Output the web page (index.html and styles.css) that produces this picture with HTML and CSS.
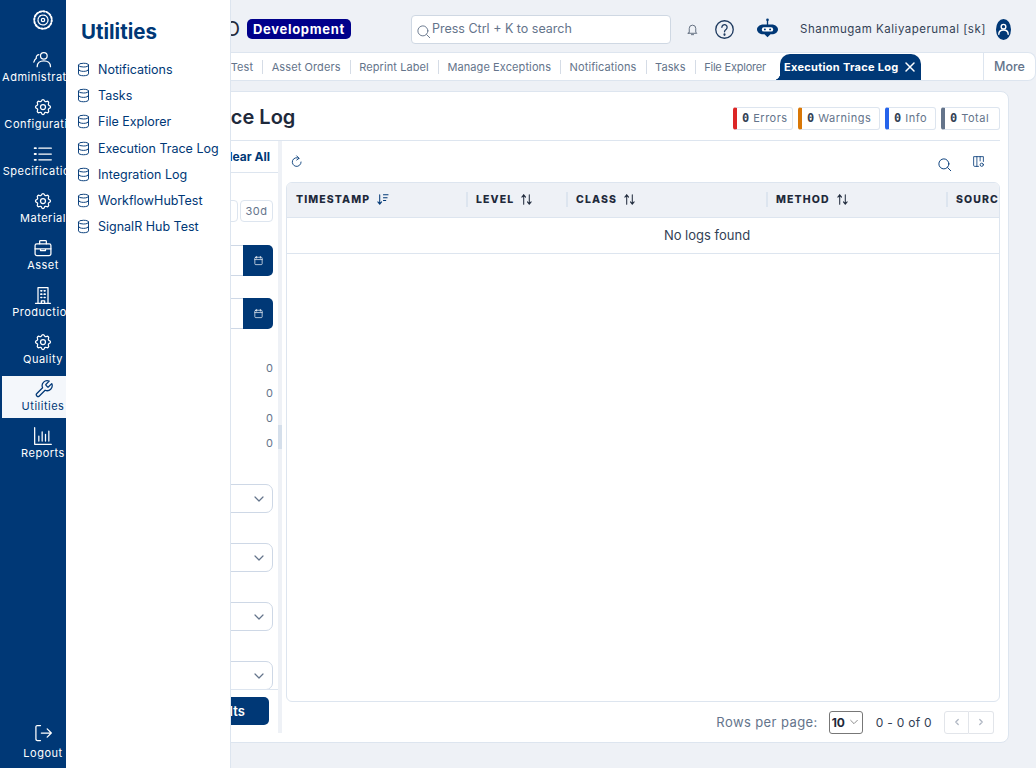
FILE: index.html
```html
<!DOCTYPE html>
<html lang="en">
<head>
    <meta charset="UTF-8">
    <meta name="viewport" content="width=device-width, initial-scale=1.0">
    <title>Execution Trace Log</title>
    <link rel="stylesheet" href="styles.css">
</head>
<body>
    <svg class="icon-defs">
        <symbol id="i-gear" viewBox="0 0 24 24"><path d="M10.325 4.317c.426-1.756 2.924-1.756 3.35 0a1.724 1.724 0 002.573 1.066c1.543-.94 3.31.826 2.37 2.37a1.724 1.724 0 001.065 2.572c1.756.426 1.756 2.924 0 3.35a1.724 1.724 0 00-1.066 2.573c.94 1.543-.826 3.31-2.37 2.37a1.724 1.724 0 00-2.572 1.065c-.426 1.756-2.924 1.756-3.35 0a1.724 1.724 0 00-2.573-1.066c-1.543.94-3.31-.826-2.37-2.37a1.724 1.724 0 00-1.065-2.572c-1.756-.426-1.756-2.924 0-3.35a1.724 1.724 0 001.066-2.573c-.94-1.543.826-3.31 2.37-2.37.996.608 2.296.07 2.572-1.065z"/><circle cx="12" cy="12" r="3"/></symbol>
        <symbol id="i-db" viewBox="0 0 24 24"><ellipse cx="12" cy="5" rx="8" ry="3"/><path d="M4 5v14c0 1.700 3.600 3 8 3s8-1.300 8-3V5M4 12c0 1.700 3.600 3 8 3s8-1.300 8-3"/></symbol>
        <symbol id="i-sort" viewBox="0 0 14 14"><path d="M4 12V2M4 2L2 4.500M4 2l2 2.500M10 2v10M10 12l-2-2.500M10 12l2-2.500"/></symbol>
        <symbol id="i-search" viewBox="0 0 24 24"><circle cx="11" cy="11" r="8"/><path d="M17 17l5 5"/></symbol>
        <symbol id="i-cal" viewBox="0 0 24 24"><rect x="4" y="5" width="16" height="16" rx="2"/><path d="M8 3v4M16 3v4M4 10h16"/></symbol>
        <symbol id="i-chev" viewBox="0 0 12 12"><path d="M2 4l4 4 4-4"/></symbol>
    </svg>

    <nav class="rail">
        <div class="rail-logo">
            <svg class="rail-icon" viewBox="0 0 24 24"><circle cx="12" cy="12" r="10.500" stroke-width="2.400" stroke-dasharray="2 2.100"/><circle cx="12" cy="12" r="6" stroke-dasharray="2.200 1"/><circle cx="12" cy="12" r="2"/></svg>
        </div>
        <a class="rail-item">
            <svg class="rail-icon" viewBox="0 0 24 24"><circle cx="13" cy="7" r="4"/><path d="M5 20c0-4.500 3.500-7 8-7s8 2.500 8 7M7 5.500C4.500 6 3.500 8 4 10c-1.500 1-2.500 2.500-3 4.500"/></svg>
            <span>Administration</span>
        </a>
        <a class="rail-item">
            <svg class="rail-icon"><use href="#i-gear"/></svg>
            <span>Configuration</span>
        </a>
        <a class="rail-item">
            <svg class="rail-icon" viewBox="0 0 24 24"><path d="M7 5h15M7 12h15M7 19h15"/><path d="M2 5h1.500M2 12h1.500M2 19h1.500" stroke-width="2.200"/></svg>
            <span>Specifications</span>
        </a>
        <a class="rail-item">
            <svg class="rail-icon"><use href="#i-gear"/></svg>
            <span>Material</span>
        </a>
        <a class="rail-item">
            <svg class="rail-icon" viewBox="0 0 24 24"><rect x="2.500" y="7" width="19" height="14" rx="2"/><path d="M8 7V4a1 1 0 011-1h6a1 1 0 011 1v3M2.500 13h19M9 13v2h6v-2"/></svg>
            <span>Asset</span>
        </a>
        <a class="rail-item">
            <svg class="rail-icon" viewBox="0 0 24 24"><path d="M6 22V3h12v19M3 22h18M10 22v-3h4v3"/><path d="M9.500 7h1M13.500 7h1M9.500 11h1M13.500 11h1M9.500 15h1M13.500 15h1" stroke-width="2"/></svg>
            <span>Production</span>
        </a>
        <a class="rail-item">
            <svg class="rail-icon"><use href="#i-gear"/></svg>
            <span>Quality</span>
        </a>
        <a class="rail-item active">
            <svg class="rail-icon" viewBox="0 0 24 24"><path d="M15.700 6.300a1 1 0 000 1.400l1.600 1.600a1 1 0 001.400 0l3.770-3.770a6 6 0 01-7.940 7.940l-6.910 6.910a2.120 2.120 0 01-3-3l6.910-6.910a6 6 0 017.940-7.940l-3.760 3.760z"/></svg>
            <span>Utilities</span>
        </a>
        <a class="rail-item">
            <svg class="rail-icon" viewBox="0 0 24 24"><path d="M2 2v20h20M7 18v-6M11 18V7M15 18v-8M19 18V6"/></svg>
            <span>Reports</span>
        </a>
        <a class="rail-item logout">
            <svg class="rail-icon" viewBox="0 0 24 24"><path d="M9 3H5a2 2 0 00-1.500 1.500v15A2 2 0 005 21h4M10 12h12M17 7l5 5-5 5"/></svg>
            <span>Logout</span>
        </a>
    </nav>

    <aside class="flyout">
        <h2>Utilities</h2>
        <ul>
            <li><svg><use href="#i-db"/></svg>Notifications</li>
            <li><svg><use href="#i-db"/></svg>Tasks</li>
            <li><svg><use href="#i-db"/></svg>File Explorer</li>
            <li><svg><use href="#i-db"/></svg>Execution Trace Log</li>
            <li><svg><use href="#i-db"/></svg>Integration Log</li>
            <li><svg><use href="#i-db"/></svg>WorkflowHubTest</li>
            <li><svg><use href="#i-db"/></svg>SignalR Hub Test</li>
        </ul>
    </aside>

    <div class="main">
        <header class="topbar">
            <div class="brand">PRO</div>
            <div class="env-badge">Development</div>
            <div class="search-box">
                <svg><use href="#i-search"/></svg>
                <span>Press Ctrl + K to search</span>
            </div>
            <svg class="bell" viewBox="0 0 24 24"><path d="M6 17V10a6 6 0 0112 0v7l2 2H4zM10 21.500h4"/></svg>
            <svg class="help" viewBox="0 0 24 24"><circle cx="12" cy="12" r="10"/><path d="M9 9.500a3 3 0 115 2.200c-1.200.9-2 1.500-2 3"/><path d="M12 17.500v.6" stroke-width="2.400"/></svg>
            <svg class="bot" viewBox="0 0 24 24"><path d="M12 8V2.500" stroke="#003876" stroke-width="1.500"/><circle class="bot-fill" cx="12" cy="2" r="1.500"/><path class="bot-fill" d="M7 7.500h10c3.500 0 7 2.500 7 5.500s-3.500 5.500-7 5.500h-1.500L12 22l-3.500-3.500H7c-3.500 0-7-2.500-7-5.500s3.500-5.500 7-5.500z"/><rect x="5.500" y="10.500" width="13" height="5" rx="2.500" fill="#fff"/><circle class="bot-fill" cx="9" cy="13" r="1.100"/><circle class="bot-fill" cx="15" cy="13" r="1.100"/></svg>
            <span class="user-name">Shanmugam Kaliyaperumal [sk]</span>
            <div class="avatar">
                <svg viewBox="0 0 16 22"><circle cx="8" cy="8" r="2.500"/><path d="M3 16c0-3 2-4.500 5-4.500s5 1.500 5 4.500"/></svg>
            </div>
        </header>

        <div class="tabbar">
            <div class="tabs">
                <a class="tab">Test</a>
                <a class="tab">Asset Orders</a>
                <a class="tab">Reprint Label</a>
                <a class="tab">Manage Exceptions</a>
                <a class="tab">Notifications</a>
                <a class="tab">Tasks</a>
                <a class="tab last">File Explorer</a>
                <a class="tab-active">Execution Trace Log
                    <svg viewBox="0 0 12 12"><path d="M2 2l8 8M10 2l-8 8"/></svg>
                </a>
            </div>
            <a class="more">More</a>
        </div>

        <section class="card">
            <div class="card-head">
                <h1>Execution Trace Log</h1>
                <div class="stats">
                    <div class="stat s-error"><b>0</b>Errors</div>
                    <div class="stat s-warn"><b>0</b>Warnings</div>
                    <div class="stat s-info"><b>0</b>Info</div>
                    <div class="stat s-total"><b>0</b>Total</div>
                </div>
            </div>

            <div class="card-body">
                <div class="filters">
                    <div class="filters-head">
                        <a>Clear All</a>
                    </div>
                    <div class="filters-scroll">
                        <div class="quick">
                            <button></button>
                            <button>30d</button>
                        </div>
                        <div class="date-field">
                            <div class="date-input"></div>
                            <button><svg><use href="#i-cal"/></svg></button>
                        </div>
                        <div class="date-field second">
                            <div class="date-input"></div>
                            <button><svg><use href="#i-cal"/></svg></button>
                        </div>
                        <ul class="counts">
                            <li>0</li>
                            <li>0</li>
                            <li>0</li>
                            <li>0</li>
                        </ul>
                        <div class="select"><svg><use href="#i-chev"/></svg></div>
                        <div class="select"><svg><use href="#i-chev"/></svg></div>
                        <div class="select"><svg><use href="#i-chev"/></svg></div>
                        <div class="select"><svg><use href="#i-chev"/></svg></div>
                    </div>
                    <div class="filters-foot">
                        <button>Show Results</button>
                    </div>
                </div>

                <div class="scrollbar"><div class="thumb"></div></div>

                <div class="results">
                    <div class="toolbar">
                        <svg class="refresh" viewBox="0 0 24 24"><path d="M19 12a7.500 7.500 0 11-3.500-6.300M11.500 1.500l4 4.200-4 3"/></svg>
                        <svg class="tool-search"><use href="#i-search"/></svg>
                        <svg class="tool-cols" viewBox="0 0 24 24"><path d="M12 21H5a2 2 0 01-2-2V3h18v9M9 3v18M15 3v8"/><circle cx="18" cy="18" r="3"/></svg>
                    </div>
                    <div class="table">
                        <div class="thead">
                            <div class="th">TIMESTAMP
                                <svg viewBox="0 0 14 14"><path d="M4 2v10M4 12l-2-2.500M4 12l2-2.500M8 2h5M8 5h4M8 8h2.500"/></svg>
                            </div>
                            <div class="th">LEVEL <svg><use href="#i-sort"/></svg></div>
                            <div class="th">CLASS <svg><use href="#i-sort"/></svg></div>
                            <div class="th">METHOD <svg><use href="#i-sort"/></svg></div>
                            <div class="th">SOURCE <svg><use href="#i-sort"/></svg></div>
                        </div>
                        <div class="empty-row"><span>No logs found</span></div>
                    </div>
                    <div class="pager">
                        <span class="rows-label">Rows per page:</span>
                        <div class="rows-select">10<svg><use href="#i-chev"/></svg></div>
                        <span class="range">0 - 0 of 0</span>
                        <div class="pager-btns">
                            <button><svg viewBox="0 0 12 12"><path d="M7.500 3L4.500 6l3 3"/></svg></button>
                            <button><svg viewBox="0 0 12 12"><path d="M4.500 3l3 3-3 3"/></svg></button>
                        </div>
                    </div>
                </div>
            </div>
        </section>
    </div>
</body>
</html>
```

FILE: styles.css
```css
* {
    box-sizing: border-box;
}

html, body {
    height: 100%;
}

body {
    margin: 0;
    display: flex;
    height: 100vh;
    overflow: hidden;
    font-family: 'Inter', 'Liberation Sans', sans-serif;
    background-color: #eef1f6;
    color: #1e293b;
}

svg {
    fill: none;
    stroke: currentColor;
    stroke-width: 1.5;
    stroke-linecap: round;
    stroke-linejoin: round;
}

ul {
    margin: 0;
    padding: 0;
    list-style: none;
}

button {
    font-family: inherit;
}

.icon-defs {
    display: none;
}

/* left rail */
.rail {
    flex: 0 0 66px;
    width: 66px;
    background-color: #003876;
    color: #fff;
    overflow: hidden;
    display: flex;
    flex-direction: column;
    padding-top: 10px;
}

.rail-logo {
    width: 86px;
    height: 24px;
    margin-bottom: 13px;
    display: flex;
    justify-content: center;
}

.rail-icon {
    width: 20px;
    height: 20px;
}

.rail-item {
    flex: none;
    width: 86px;
    height: 42px;
    margin-bottom: 5px;
    padding-top: 3px;
    display: flex;
    flex-direction: column;
    align-items: center;
    font-size: 11px;
    line-height: 15px;
    letter-spacing: 0.5px;
    white-space: nowrap;
}

.rail-item.active {
    margin-left: 2px;
    width: 82px;
    background-color: #f4f7fb;
    color: #003876;
}

.rail-item.logout {
    margin-top: auto;
    margin-bottom: 6px;
}

.rail-item.logout span {
    margin-top: 3px;
}

/* utilities menu, sits over the page */
.flyout {
    position: absolute;
    left: 66px;
    top: 0;
    bottom: 0;
    width: 165px;
    background-color: #fff;
    border-right: 1px solid #dde5ef;
    color: #003876;
    z-index: 10;
}

.flyout h2 {
    margin: 18px 0 11px 15px;
    font-size: 20.5px;
    line-height: 27px;
    font-weight: 700;
}

.flyout li {
    height: 26.3px;
    padding-left: 9.5px;
    display: flex;
    align-items: center;
    gap: 7.5px;
    font-size: 12.5px;
    white-space: nowrap;
}

.flyout li svg {
    width: 15px;
    height: 15px;
    flex: none;
}

/* page column */
.main {
    flex: 1;
    min-width: 0;
    display: flex;
    flex-direction: column;
    padding-bottom: 25px;
}

.topbar {
    flex: 0 0 52px;
    display: flex;
    align-items: center;
    padding: 6px 0 0 90px;
}

.brand {
    width: 84px;
    font-size: 20px;
    font-weight: 400;
    text-align: right;
    white-space: nowrap;
    color: #1e293b;
}

.env-badge {
    margin-left: 7px;
    width: 104px;
    height: 20px;
    background-color: #00008b;
    color: #fff;
    border-radius: 5px;
    font-size: 13px;
    line-height: 20px;
    font-weight: 700;
    letter-spacing: 0.7px;
    text-align: center;
}

.search-box {
    margin-left: 60px;
    width: 260px;
    height: 29px;
    background-color: #fff;
    border: 1px solid #cfd8e3;
    border-radius: 4px;
    display: flex;
    align-items: center;
    gap: 1px;
    padding-left: 4px;
    font-size: 12.5px;
    color: #64748b;
}

.search-box svg {
    width: 15px;
    height: 15px;
    margin-top: 4px;
}

.search-box span {
    margin-top: -2px;
}

.bell {
    width: 13px;
    height: 13px;
    margin-left: 15px;
    color: #475569;
}

.help {
    width: 21px;
    height: 21px;
    margin-left: 15px;
    color: #1e3a5f;
}

.bot {
    width: 21px;
    height: 23px;
    margin-left: 22px;
    stroke: none;
    margin-top: -2px;
}

.bot-fill {
    fill: #003876;
}

.user-name {
    margin-left: 22px;
    width: 185px;
    font-size: 11.5px;
    letter-spacing: 0.5px;
    white-space: nowrap;
    color: #334155;
}

.avatar {
    margin-left: 11px;
    width: 15px;
    height: 21px;
    border-radius: 50%;
    background-color: #003876;
    color: #fff;
}

.avatar svg {
    display: block;
    width: 15px;
    height: 21px;
}

/* open pages */
.tabbar {
    flex: 0 0 29px;
    display: flex;
    background-color: #fff;
    border: 1px solid #dde5ef;
    border-left: 0;
    border-radius: 0 8px 8px 0;
    margin-bottom: 10px;
    height: 29px;
}

.tabs {
    flex: 1;
    min-width: 0;
    display: flex;
    justify-content: flex-end;
    align-items: center;
    padding-right: 62px;
}

.tab {
    flex: none;
    padding: 0 9px 0 8.5px;
    border-right: 1px solid #d5dce6;
    font-size: 11px;
    line-height: 14px;
    letter-spacing: 0.1px;
    color: #64748b;
    white-space: nowrap;
}

.tab.last {
    border-right: 0;
    margin-right: 5px;
    letter-spacing: -0.2px;
}

.tab-active {
    flex: none;
    position: relative;
    align-self: flex-end;
    width: 141px;
    height: 26px;
    background-color: #003876;
    color: #fff;
    border-radius: 10px 10px 0 0;
    padding-left: 4px;
    display: flex;
    align-items: center;
    justify-content: space-between;
    padding-right: 5px;
    font-size: 11px;
    font-weight: 700;
    letter-spacing: 0.3px;
    white-space: nowrap;
}

.tab-active::before {
    content: '';
    position: absolute;
    left: -7px;
    bottom: 0;
    width: 7px;
    height: 7px;
    background: radial-gradient(circle at 0 0, transparent 7px, #003876 7.500px);
}

.tab-active svg {
    width: 12px;
    height: 12px;
}

.more {
    flex: 0 0 52px;
    border-left: 1px solid #dde5ef;
    display: flex;
    align-items: center;
    justify-content: center;
    font-size: 12.5px;
    font-weight: 500;
    color: #64748b;
}

.card {
    flex: 1;
    min-height: 0;
    margin: 0 27px 0 10px;
    background-color: #fff;
    border: 1px solid #dde5ef;
    border-radius: 8px;
    padding: 0 8px 0 9px;
    display: flex;
    flex-direction: column;
}

.card-head {
    flex: 0 0 49px;
    display: flex;
    align-items: center;
    justify-content: space-between;
    border-bottom: 1px solid #dde5ef;
}

.card-head h1 {
    margin: 2px 0 0 13px;
    font-size: 20px;
    font-weight: 600;
    color: #1e293b;
    white-space: nowrap;
}

.stats {
    display: flex;
    gap: 5px;
    margin-top: 4px;
}

.stat {
    height: 23px;
    padding-left: 5px;
    border: 1px solid #dde5ef;
    border-left: 4px solid;
    border-radius: 3px;
    display: flex;
    align-items: center;
    font-size: 11px;
    letter-spacing: 0.5px;
    color: #64748b;
    white-space: nowrap;
}

.stat b {
    margin-right: 4px;
    font-family: 'DejaVu Sans Mono', monospace;
    font-size: 12px;
    letter-spacing: 0;
    color: #334155;
}

.s-error { width: 60px; border-left-color: #dc2626; }
.s-warn { width: 82px; border-left-color: #d97706; }
.s-info { width: 51px; border-left-color: #2563eb; }
.s-total { width: 59px; border-left-color: #64748b; }

.card-body {
    flex: 1;
    min-height: 0;
    display: flex;
}

/* filter column, mostly under the menu */
.filters {
    flex: 0 0 192px;
    display: flex;
    flex-direction: column;
    margin-bottom: 9px;
}

.filters-head {
    flex: 0 0 32px;
    display: flex;
    align-items: center;
    justify-content: flex-end;
    padding-right: 8px;
    border-bottom: 1px solid #dde5ef;
    font-size: 12px;
    font-weight: 700;
    color: #003876;
}

.filters-scroll {
    flex: 1;
    min-height: 0;
    overflow: hidden;
    padding-right: 5px;
}

.quick {
    display: flex;
    justify-content: flex-end;
    gap: 2px;
    margin-top: 27px;
}

.quick button {
    width: 33px;
    height: 22px;
    padding: 0;
    background-color: #fff;
    border: 1px solid #dde5ef;
    border-radius: 4px;
    font-size: 11px;
    letter-spacing: 0.5px;
    color: #64748b;
}

.date-field {
    margin-top: 23px;
    display: flex;
    height: 31px;
}

.date-field.second {
    margin-top: 22px;
}

.date-input {
    flex: 1;
    border: 1px solid #ced8e6;
    border-right: 0;
    border-radius: 4px 0 0 4px;
}

.date-field button {
    flex: 0 0 30px;
    padding: 0;
    background-color: #003876;
    border: 0;
    border-radius: 0 5px 5px 0;
    color: #fff;
}

.date-field svg {
    width: 11px;
    height: 11px;
    display: block;
    margin: 0 auto;
}

.counts {
    margin: 27px 0 28px;
}

.counts li {
    height: 25px;
    line-height: 25px;
    text-align: right;
    font-size: 11px;
    color: #64748b;
}

.select {
    height: 29px;
    border: 1px solid #ced8e6;
    border-radius: 7px;
    display: flex;
    align-items: center;
    justify-content: flex-end;
    padding-right: 7px;
    margin-bottom: 30px;
    color: #64748b;
}

.select svg {
    width: 12px;
    height: 12px;
    stroke-width: 1.2;
}

.filters-foot {
    flex: 0 0 44px;
    border-top: 1px solid #dde5ef;
    padding: 7px 9px 0 0;
}

.filters-foot button {
    width: 100%;
    height: 28px;
    background-color: #003876;
    border: 0;
    border-radius: 5px;
    color: #fff;
    font-size: 13px;
    font-weight: 600;
    padding-left: 56px;
}

.scrollbar {
    flex: 0 0 4px;
    background-color: #eef1f6;
    padding-top: 284px;
    margin-bottom: 9px;
}

.thumb {
    height: 24px;
    background-color: #d5dfeb;
}

.results {
    flex: 1;
    min-width: 0;
    padding-left: 4px;
    display: flex;
    flex-direction: column;
}

.toolbar {
    flex: 0 0 41px;
    display: flex;
    align-items: center;
    color: #003876;
}

.refresh {
    width: 14px;
    height: 14px;
    margin-left: 4px;
}

.tool-search {
    width: 15px;
    height: 15px;
    margin-left: auto;
    margin-top: 5px;
}

.tool-cols {
    width: 13px;
    height: 13px;
    margin: 0 15px 0 20px;
}

.table {
    flex: 1;
    min-height: 0;
    overflow: hidden;
    border: 1px solid #dde5ef;
    border-radius: 6px;
}

.thead,
.empty-row {
    width: 842px;
    margin-left: -1px;
}

.thead {
    height: 35px;
    padding-bottom: 2px;
    display: grid;
    grid-template-columns: 180px 100px 200px 180px 182px;
    align-items: center;
    background-color: #eef1f6;
    border-bottom: 1px solid #dde5ef;
}

.th {
    height: 15px;
    padding-left: 8px;
    display: flex;
    align-items: center;
    gap: 6px;
    font-size: 10.5px;
    font-weight: 800;
    letter-spacing: 1.1px;
    color: #1e293b;
    white-space: nowrap;
    border-left: 2px solid #dde5ef;
}

.th:first-child {
    border-left: 0;
    padding-left: 10px;
}

.th svg {
    width: 13px;
    height: 13px;
    flex: none;
    stroke-width: 1.1;
    color: #1e293b;
}

.th:first-child svg {
    color: #003876;
}

.empty-row {
    height: 36px;
    padding-bottom: 2px;
    border-bottom: 1px solid #dde5ef;
    display: flex;
    align-items: center;
    justify-content: center;
    font-size: 13px;
    color: #334155;
}

.pager {
    flex: 0 0 40px;
    display: flex;
    align-items: center;
    justify-content: flex-end;
    padding-right: 6px;
}

.rows-label {
    font-size: 13px;
    letter-spacing: 0.4px;
    color: #64748b;
}

.rows-select {
    width: 34px;
    height: 23px;
    margin-left: 11px;
    padding-left: 2px;
    border: 1px solid #777;
    border-radius: 3px;
    display: flex;
    align-items: center;
    justify-content: space-between;
    padding-right: 3px;
    font-size: 12px;
    font-weight: 700;
    color: #1e293b;
}

.rows-select svg {
    width: 10px;
    height: 10px;
    color: #777;
    stroke-width: 1;
}

.range {
    margin-left: 13px;
    font-size: 12px;
    letter-spacing: 0.3px;
    color: #334155;
}

.pager-btns {
    display: flex;
    margin-left: 12px;
}

.pager-btns button {
    width: 25px;
    height: 23px;
    padding: 0;
    background-color: #fff;
    border: 1px solid #e2e5ea;
    border-radius: 3px 0 0 3px;
    color: #b0b7c3;
}

.pager-btns button + button {
    border-left: 0;
    border-radius: 0 3px 3px 0;
}

.pager-btns svg {
    width: 10px;
    height: 10px;
    display: block;
    margin: 0 auto;
}
```
